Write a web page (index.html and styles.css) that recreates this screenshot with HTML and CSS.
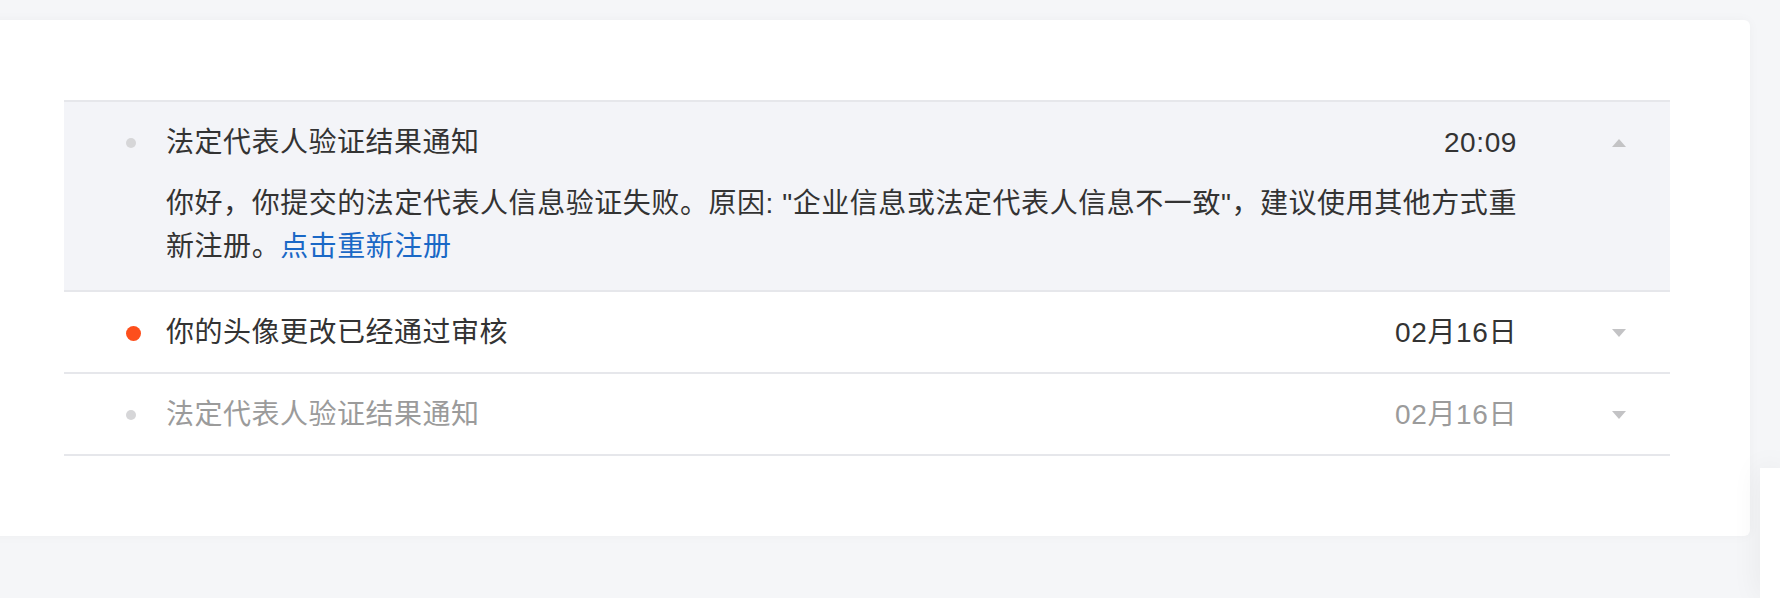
FILE: index.html
```html
<!DOCTYPE html>
<html lang="zh-CN">
<head>
<meta charset="utf-8">
<title>消息通知</title>
<link rel="stylesheet" href="styles.css">
</head>
<body>
<div class="page">
  <section class="card">
    <ul class="msg-list">
      <li class="item open">
        <span class="dot-col"><span class="dot"></span></span>
        <div class="main">
          <div class="head">
            <span class="title">法定代表人验证结果通知</span>
            <span class="time">20:09</span>
          </div>
          <p class="body">你好，你提交的法定代表人信息验证失败。原因: "企业信息或法定代表人信息不一致"，建议使用其他方式重新注册。<a class="link" href="#">点击重新注册</a></p>
        </div>
        <span class="caret-col"><span class="caret up"></span></span>
      </li>
      <li class="item">
        <span class="dot-col"><span class="dot unread"></span></span>
        <div class="main">
          <div class="head">
            <span class="title">你的头像更改已经通过审核</span>
            <span class="time">02月16日</span>
          </div>
        </div>
        <span class="caret-col"><span class="caret down"></span></span>
      </li>
      <li class="item read">
        <span class="dot-col"><span class="dot"></span></span>
        <div class="main">
          <div class="head">
            <span class="title">法定代表人验证结果通知</span>
            <span class="time">02月16日</span>
          </div>
        </div>
        <span class="caret-col"><span class="caret down"></span></span>
      </li>
    </ul>
  </section>
  <div class="side-panel"></div>
</div>
</body>
</html>
```

FILE: styles.css
```css
* { box-sizing: border-box; }

html, body {
  margin: 0;
  padding: 0;
}

body {
  background: #f5f6f8;
  font-family: "Liberation Sans", "Noto Sans CJK SC", sans-serif;
  font-size: 28px;
  color: #333333;
  overflow: hidden;
  width: 1780px;
  height: 598px;
  position: relative;
}

.page {
  padding-top: 20px;
  height: 598px;
}

.card {
  margin-left: -16px;
  width: 1766px;
  background: #ffffff;
  border-radius: 6px;
  box-shadow: 0 0 12px rgba(0, 0, 0, 0.035);
  padding: 80px 80px;
}

.msg-list {
  list-style: none;
  margin: 0;
  padding: 0;
  border-top: 2px solid #e6e7eb;
}

.item {
  display: flex;
  align-items: flex-start;
  padding: 20px 44px 18px 62px;
  border-bottom: 2px solid #e6e7eb;
}

.item.open {
  background: #f3f4f8;
  padding-bottom: 22px;
}

.dot-col {
  width: 40px;
  height: 42px;
  display: flex;
  align-items: center;
  flex: none;
}

.dot {
  width: 10px;
  height: 10px;
  border-radius: 50%;
  background: #d6d6d8;
}

.dot.unread {
  width: 15px;
  height: 15px;
  background: #fd4f1c;
}

.main {
  flex: 1;
  min-width: 0;
}

.head {
  display: flex;
  justify-content: space-between;
  align-items: center;
  height: 42px;
  line-height: 42px;
}

.title {
  white-space: nowrap;
  letter-spacing: 0.5px;
}

.time {
  white-space: nowrap;
  letter-spacing: 0.6px;
}

.item.read .title,
.item.read .time {
  color: #9b9b9b;
}

.body {
  margin: 18px 0 0;
  line-height: 43px;
  letter-spacing: 0.55px;
}

.link {
  color: #1a68c6;
  text-decoration: none;
}

.caret-col {
  flex: none;
  width: 15px;
  height: 42px;
  margin-left: 94px;
  display: flex;
  align-items: center;
  justify-content: center;
}

.caret {
  width: 0;
  height: 0;
  border-left: 7.5px solid transparent;
  border-right: 7.5px solid transparent;
}

.caret.up {
  border-bottom: 8px solid #c3c3c5;
}

.caret.down {
  border-top: 8px solid #c3c3c5;
}

.side-panel {
  position: absolute;
  left: 1760px;
  top: 468px;
  width: 20px;
  height: 130px;
  background: #ffffff;
  box-shadow: 0 0 30px rgba(0, 0, 0, 0.07);
}
```
